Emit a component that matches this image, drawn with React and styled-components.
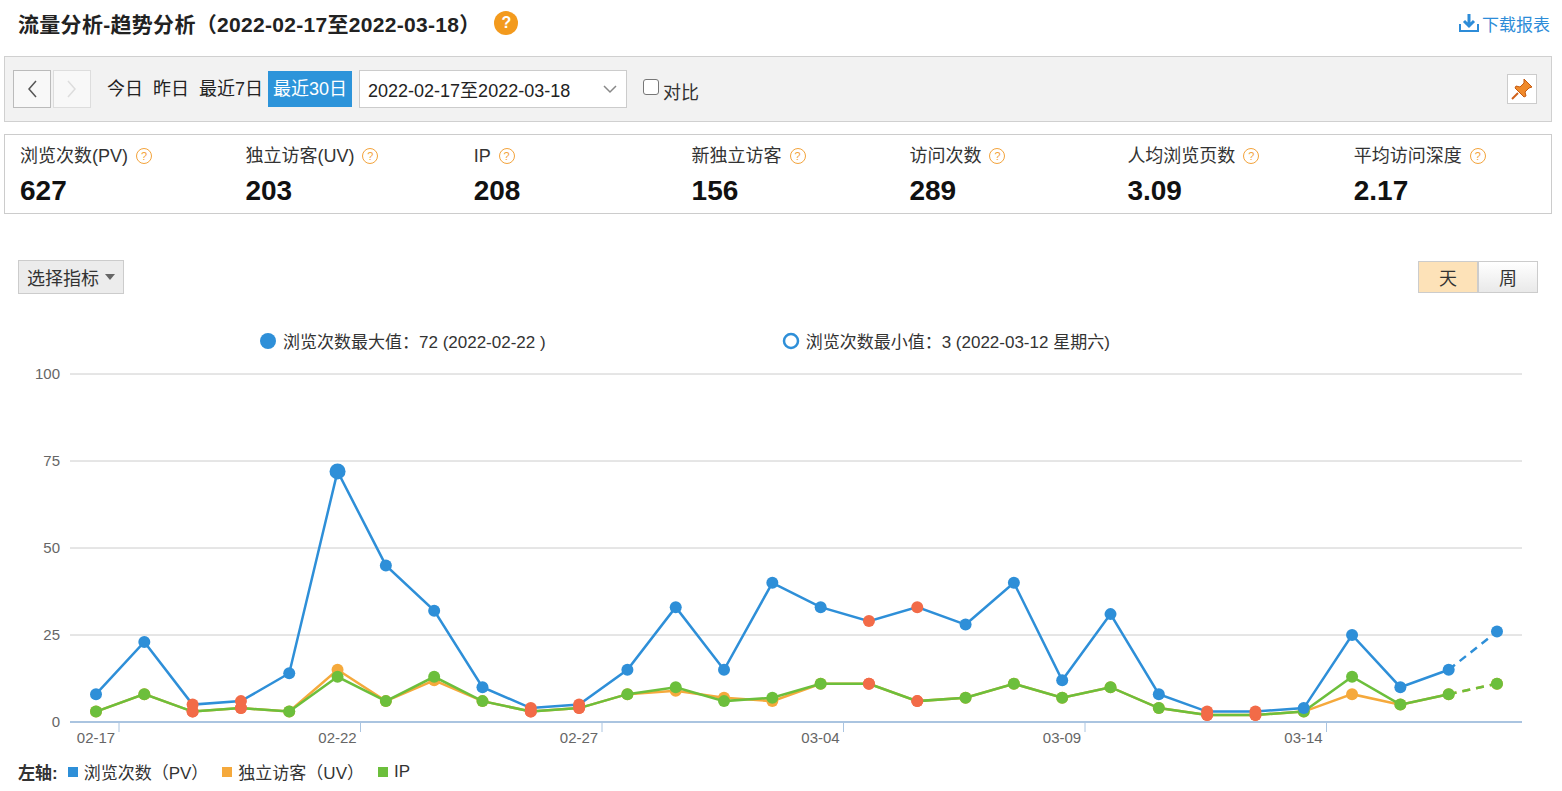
import React from "react";
import styled, { createGlobalStyle } from "styled-components";

const G = createGlobalStyle`
  body{margin:0;background:#fff;font-family:"Microsoft YaHei","Liberation Sans","Noto Sans CJK SC",sans-serif;color:#333;}
`;
const Page = styled.div`width:1562px;height:791px;overflow:hidden;padding:0 10px 0 4px;box-sizing:border-box;`;
const Head = styled.div`display:flex;align-items:center;height:46px;padding-left:14px;`;
const Title = styled.div`font-size:21px;font-weight:bold;color:#222;letter-spacing:0.3px;`;
const Q = styled.span`display:inline-flex;width:24px;height:24px;border-radius:50%;background:#f39a1d;color:#fff;font-weight:bold;font-size:16px;align-items:center;justify-content:center;margin-left:14px;`;
const Dl = styled.div`margin-left:auto;color:#2d8cd8;font-size:17px;display:flex;align-items:center;gap:2px;margin-right:2px;`;
const Bar = styled.div`height:64px;border:1px solid #d0d0d0;background:#f2f2f2;display:flex;align-items:center;padding:0 8px;margin-top:10px;`;
const Arrow = styled.div`width:38px;height:38px;box-sizing:border-box;border:1px solid ${p=>p.off?"#ddd":"#bbb"};background:#f8f8f8;display:flex;align-items:center;justify-content:center;margin-right:2px;`;
const Quick = styled.div`font-size:18px;padding:0 5px;height:36px;line-height:36px;color:${p=>p.on?"#fff":"#222"};background:${p=>p.on?"#2d94da":"transparent"};margin-left:${p=>p.first?"9px":"0"};`;
const Sel = styled.div`width:268px;height:38px;box-sizing:border-box;border:1px solid #ccc;background:#fff;margin-left:7px;display:flex;align-items:center;padding:0 8px;font-size:18px;color:#222;justify-content:space-between;`;
const Chk = styled.label`display:flex;align-items:center;font-size:18px;margin-left:16px;margin-top:4px;gap:4px;`;
const Box = styled.span`width:14px;height:14px;border:1px solid #777;border-radius:3px;background:#fff;margin-top:-8px;`;
const Pin = styled.div`margin-left:auto;width:28px;height:28px;border:1px solid #ccc;background:#fff;display:flex;align-items:center;justify-content:center;margin-right:6px;`;
const Stats = styled.div`height:78px;border:1px solid #ccc;margin-top:12px;display:flex;`;
const Stat = styled.div`width:${p=>p.w}px;padding:8px 0 0 15px;`;
const Lbl = styled.div`font-size:18px;color:#333;display:flex;align-items:center;gap:8px;height:26px;line-height:26px;`;
const Sq = styled.span`width:16px;height:16px;border:1.5px solid #f3a33b;border-radius:50%;color:#f3a33b;font-size:11px;line-height:1;display:inline-flex;align-items:center;justify-content:center;box-sizing:border-box;`;
const Val = styled.div`font-size:28px;font-weight:bold;color:#111;margin-top:6px;font-family:"Liberation Sans",sans-serif;`;
const Tools = styled.div`display:flex;justify-content:space-between;align-items:center;margin-top:46px;padding-left:14px;`;
const Pick = styled.div`height:32px;padding:0 8px;border:1px solid #ccc;background:#ececec;font-size:18px;display:flex;align-items:center;gap:6px;`;
const Seg = styled.div`display:flex;margin-right:14px;`;
const SegB = styled.div`width:60px;height:32px;box-sizing:border-box;border:1px solid #ccc;display:flex;align-items:center;justify-content:center;font-size:18px;background:${p=>p.on?"#fde2b8":"linear-gradient(#fff,#e9e9e9)"};`;
const Legend = styled.div`display:flex;align-items:center;gap:6px;font-size:17px;color:#333;margin-left:${p=>p.ml}px;`;
const Foot = styled.div`display:flex;align-items:center;font-size:17px;padding-left:14px;gap:6px;`;
const Dot = styled.span`width:10px;height:10px;background:${p=>p.c};margin-left:${p=>p.ml||0}px;`;

const pv=[8,23,5,6,14,72,45,32,10,4,5,15,33,15,40,33,29,33,28,40,12,31,8,3,3,4,25,10,15,26];
const uv=[3,8,3,4,3,15,6,12,6,3,4,8,9,7,6,11,11,6,7,11,7,10,4,2,2,3,8,5,8,11];
const ip=[3,8,3,4,3,13,6,13,6,3,4,8,10,6,7,11,11,6,7,11,7,10,4,2,2,3,13,5,8,11];
const wk=new Set([2,3,9,10,16,17,23,24]);
const X=i=>96+i*48.31, Y=v=>718-v*3.48;

function Series({d,c}){
  const solid=d.slice(0,29).map((v,i)=>`${X(i)},${Y(v)}`).join(" ");
  return <g>
    <polyline points={solid} fill="none" stroke={c} strokeWidth="2.5"/>
    <line x1={X(28)} y1={Y(d[28])} x2={X(29)} y2={Y(d[29])} stroke={c} strokeWidth="2.5" strokeDasharray="8 6"/>
    {d.map((v,i)=><circle key={i} cx={X(i)} cy={Y(v)} r={c==="#2e8fd8"&&i===5?8:6} fill={wk.has(i)?"#f26b48":c}/>)}
  </g>;
}

function Chart(){
  const labs=["02-17","02-22","02-27","03-04","03-09","03-14"];
  return <svg width="1562" height="400" viewBox="0 355 1562 400" style={{display:"block",marginLeft:-4}}>
    {[0,25,50,75,100].map(v=><g key={v}>
      <line x1="70" x2="1522" y1={Y(v)} y2={Y(v)} stroke={v===0?"#aac4e0":"#ccc"} strokeWidth={v===0?2:1}/>
      <text x="60" y={Y(v)+5} textAnchor="end" fontSize="15" fill="#666" fontFamily="Liberation Sans">{v}</text>
    </g>)}
    {labs.map((l,k)=><g key={l}>
      <line x1={119+k*241.5} x2={119+k*241.5} y1="718" y2="728" stroke="#aac4e0"/>
      <text x={96+k*241.5} y="739" textAnchor="middle" fontSize="15" fill="#666" fontFamily="Liberation Sans">{l}</text>
    </g>)}
    <Series d={uv} c="#f5a93c"/>
    <Series d={ip} c="#6cbf3c"/>
    <Series d={pv} c="#2e8fd8"/>
  </svg>;
}

export default function App(){
  const stats=[["浏览次数(PV)","627",224],["独立访客(UV)","203",227],["IP","208",216],["新独立访客","156",216],["访问次数","289",216],["人均浏览页数","3.09",225],["平均访问深度","2.17",210]];
  return <Page><G/>
    <Head><Title>流量分析-趋势分析（2022-02-17至2022-03-18）</Title><Q>?</Q>
      <Dl><svg width="22" height="20" viewBox="0 0 22 20"><path d="M2 11v7h18v-7" fill="none" stroke="#2d8cd8" strokeWidth="2"/><path d="M11 1v11M6 8l5 5 5-5" fill="none" stroke="#2d8cd8" strokeWidth="3"/></svg>下载报表</Dl>
    </Head>
    <Bar>
      <Arrow><svg width="12" height="20"><path d="M10 2L3 10l7 8" fill="none" stroke="#555" strokeWidth="1.5"/></svg></Arrow>
      <Arrow off><svg width="12" height="20"><path d="M2 2l7 8-7 8" fill="none" stroke="#ddd" strokeWidth="1.5"/></svg></Arrow>
      <Quick first>今日</Quick><Quick>昨日</Quick><Quick>最近7日</Quick><Quick on>最近30日</Quick>
      <Sel>2022-02-17至2022-03-18<svg width="16" height="10"><path d="M2 2l6 6 6-6" fill="none" stroke="#888" strokeWidth="1.5"/></svg></Sel>
      <Chk><Box/>对比</Chk>
      <Pin><svg width="24" height="24" viewBox="0 0 24 24"><path d="M14 2l8 8-3 1-4 4 1 4-2 1-9-9 1-2 4 1 4-4z" fill="#f08a2a" stroke="#c55a10"/><path d="M8 16l-6 6" stroke="#d0601a" strokeWidth="2"/></svg></Pin>
    </Bar>
    <Stats>{stats.map(([l,v,w])=><Stat key={l} w={w}><Lbl>{l}<Sq>?</Sq></Lbl><Val>{v}</Val></Stat>)}</Stats>
    <Tools><Pick>选择指标<svg width="10" height="6"><path d="M0 0h10L5 6z" fill="#666"/></svg></Pick>
      <Seg><SegB on>天</SegB><SegB>周</SegB></Seg></Tools>
    <div style={{display:"flex",marginTop:34}}>
      <Legend ml={255}><svg width="18" height="18"><circle cx="9" cy="9" r="8" fill="#2e8fd8"/></svg>浏览次数最大值：72 (2022-02-22 )</Legend>
      <Legend ml={236}><svg width="18" height="18"><circle cx="9" cy="9" r="7" fill="none" stroke="#2e8fd8" strokeWidth="2.5"/></svg>浏览次数最小值：3 (2022-03-12 星期六)</Legend>
    </div>
    <div style={{marginTop:6}}><Chart/></div>
    <Foot style={{marginTop:0}}><b>左轴:</b><Dot c="#2e8fd8" ml={4}/>浏览次数（PV）<Dot c="#f5a93c" ml={8}/>独立访客（UV）<Dot c="#6cbf3c" ml={8}/>IP</Foot>
  </Page>;
}
